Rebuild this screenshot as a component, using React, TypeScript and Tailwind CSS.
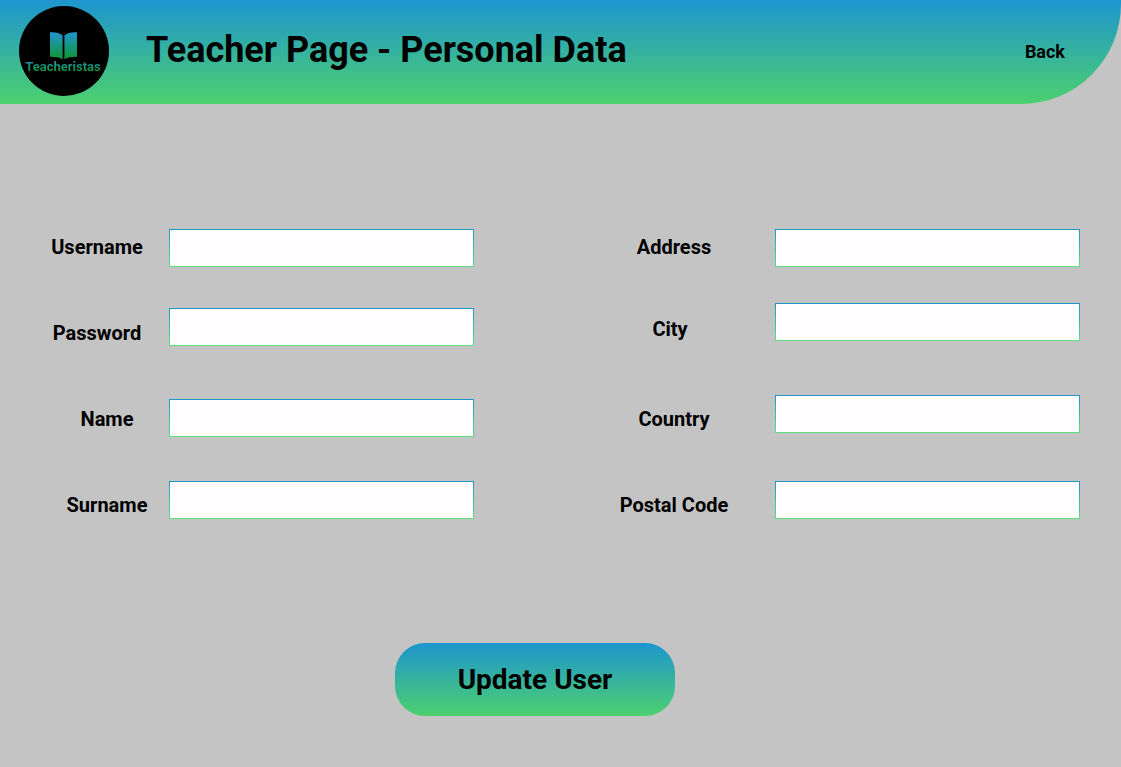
import React from "react";

type Field = {
  id: string;
  label: string;
  type?: string;
  labelClass?: string;
  inputClass?: string;
};

const accountFields: Field[] = [
  { id: "username", label: "Username" },
  { id: "password", label: "Password", type: "password", inputClass: "mt-[41px]" },
  { id: "name", label: "Name", labelClass: "pl-5", inputClass: "mt-[53px]" },
  { id: "surname", label: "Surname", labelClass: "pl-5", inputClass: "mt-11" },
];

const addressFields: Field[] = [
  { id: "address", label: "Address" },
  { id: "city", label: "City", labelClass: "-mt-1 mb-1 pr-2", inputClass: "mt-9" },
  { id: "country", label: "Country", inputClass: "mt-[54px]" },
  { id: "postal-code", label: "Postal Code", inputClass: "mt-12" },
];

function Logo() {
  return (
    <div className="flex size-[90px] shrink-0 flex-col items-center rounded-full bg-black pt-[26px] pr-0.5">
      <svg width="28" height="28" viewBox="-0.5 0 28 28" aria-hidden="true">
        <defs>
          <linearGradient id="book" x1="0" y1="0" x2="0" y2="1">
            <stop offset="0" stopColor="#2196cf" />
            <stop offset="1" stopColor="#0f9535" />
          </linearGradient>
        </defs>
        <path
          fill="url(#book)"
          d="M0.5 0.3C5 -0.3 10 0.8 13.1 3.2V27.2C9.5 25.2 5 24.6 0.5 24.7ZM27.5 0.3C23 -0.3 18 0.8 14.9 3.2V27.2C18.5 25.2 23 24.6 27.5 24.7Z"
        />
      </svg>
      <span className="bg-linear-to-b/srgb from-[#1e95b0] from-10% to-[#12953a] to-80% bg-clip-text text-[13px] leading-[14px] font-bold text-transparent">
        Teacheristas
      </span>
    </div>
  );
}

function FieldGroup({ fields, className }: { fields: Field[]; className: string }) {
  return (
    <div className={"flex " + className}>
      <div className="flex w-28 flex-col items-center gap-[62px] pt-1.5">
        {fields.map((f) => (
          <label
            key={f.id}
            htmlFor={f.id}
            className={"text-xl leading-6 font-bold whitespace-nowrap " + (f.labelClass ?? "")}
          >
            {f.label}
          </label>
        ))}
      </div>
      <div className="flex flex-col">
        {fields.map((f) => (
          <input
            key={f.id}
            id={f.id}
            name={f.id}
            type={f.type ?? "text"}
            className={
              "h-[38px] w-[305px] border border-transparent px-2 text-base outline-none [background:linear-gradient(#fffdfe,#fffdfe)_padding-box,linear-gradient(#2095cb,#5de07f)_border-box] " +
              (f.inputClass ?? "")
            }
          />
        ))}
      </div>
    </div>
  );
}

export default function App() {
  return (
    <div className="min-h-screen bg-[#c4c4c4] font-['Roboto',sans-serif] text-black">
      <header className="flex h-[104px] items-center rounded-br-[100px] bg-linear-to-b/srgb from-[#1e95cf] to-[#4dd06f] pr-14 pb-0.5 pl-[19px]">
        <Logo />
        <h1 className="ml-[37px] pb-0.5 text-4xl leading-[42px] font-bold">
          Teacher Page - Personal Data
        </h1>
        <a href="#back" className="ml-auto pt-0.5 text-lg leading-6 font-bold">
          Back
        </a>
      </header>
      <form className="pt-[125px] pb-[51px]" onSubmit={(e) => e.preventDefault()}>
        <div className="flex justify-between px-[41px]">
          <FieldGroup fields={accountFields} className="gap-4" />
          <FieldGroup fields={addressFields} className="gap-[45px]" />
        </div>
        <div className="mt-[124px] flex justify-center pr-[51px]">
          <button
            type="submit"
            className="h-[73px] w-[280px] rounded-[30px] bg-linear-to-b/srgb from-[#1e95cf] to-[#4dd06f] text-[28px] leading-8 font-bold"
          >
            Update User
          </button>
        </div>
      </form>
    </div>
  );
}
